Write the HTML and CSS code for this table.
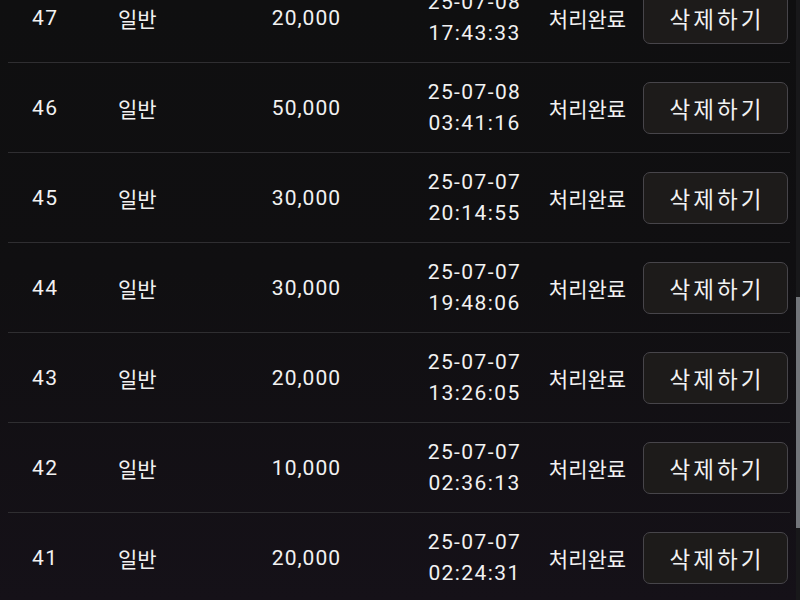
FILE: index.html
```html
<!DOCTYPE html>
<html lang="ko">
<head>
<meta charset="utf-8">
<link rel="stylesheet" href="styles.css">
</head>
<body>
<div class="list">
  <div class="row">
    <div class="id">47</div><div class="type">일반</div><div class="amt">20,000</div>
    <div class="date"><span>25-07-08</span><span>17:43:33</span></div>
    <div class="status">처리완료</div><button class="del">삭제하기</button>
  </div>
  <div class="row">
    <div class="id">46</div><div class="type">일반</div><div class="amt">50,000</div>
    <div class="date"><span>25-07-08</span><span>03:41:16</span></div>
    <div class="status">처리완료</div><button class="del">삭제하기</button>
  </div>
  <div class="row">
    <div class="id">45</div><div class="type">일반</div><div class="amt">30,000</div>
    <div class="date"><span>25-07-07</span><span>20:14:55</span></div>
    <div class="status">처리완료</div><button class="del">삭제하기</button>
  </div>
  <div class="row">
    <div class="id">44</div><div class="type">일반</div><div class="amt">30,000</div>
    <div class="date"><span>25-07-07</span><span>19:48:06</span></div>
    <div class="status">처리완료</div><button class="del">삭제하기</button>
  </div>
  <div class="row">
    <div class="id">43</div><div class="type">일반</div><div class="amt">20,000</div>
    <div class="date"><span>25-07-07</span><span>13:26:05</span></div>
    <div class="status">처리완료</div><button class="del">삭제하기</button>
  </div>
  <div class="row">
    <div class="id">42</div><div class="type">일반</div><div class="amt">10,000</div>
    <div class="date"><span>25-07-07</span><span>02:36:13</span></div>
    <div class="status">처리완료</div><button class="del">삭제하기</button>
  </div>
  <div class="row">
    <div class="id">41</div><div class="type">일반</div><div class="amt">20,000</div>
    <div class="date"><span>25-07-07</span><span>02:24:31</span></div>
    <div class="status">처리완료</div><button class="del">삭제하기</button>
  </div>
</div>
<div class="scrollbar"><div class="thumb"></div></div>
</body>
</html>
```
FILE: styles.css
```css
html, body {
  margin: 0;
  padding: 0;
  height: 600px;
  overflow: hidden;
}
body {
  background: linear-gradient(180deg, #0f0f10 0%, #100f11 45%, #151118 100%);
  color: #f2f2f2;
  font-family: Roboto, "Noto Sans CJK KR", sans-serif;
  font-size: 21px;
}
.list {
  margin: -27px 10px 0 8px;
}
.row {
  display: grid;
  grid-template-columns: 86px 100px 122px 70px 128px 99px 6px 145px;
  align-items: center;
  height: 89px;
  padding-left: 24px;
  border-bottom: 1px solid #2f2e31;
}
.id { grid-column: 1; letter-spacing: 1.5px; }
.type { grid-column: 2; }
.amt {
  grid-column: 3;
  text-align: right;
  letter-spacing: 1px;
  margin-right: -1px;
}
.date {
  grid-column: 5;
  display: flex;
  flex-direction: column;
  align-items: center;
  line-height: 31px;
  letter-spacing: 1.4px;
  padding-left: 1px;
}
.status { grid-column: 6; text-align: center; }
.del {
  grid-column: 8;
  height: 52px;
  background: #1d1b1a;
  color: #f2f2f2;
  border: 1.5px solid #47454a;
  border-radius: 7px;
  font-family: Roboto, "Noto Sans CJK KR", sans-serif;
  font-size: 22.5px;
  font-weight: 400;
  letter-spacing: 3px;
  padding: 0 0 0 3px;
}
.scrollbar {
  position: fixed;
  top: 0;
  right: 0;
  width: 4px;
  height: 600px;
  background: #18181a;
}
.thumb {
  margin-top: 297px;
  height: 231px;
  background: #72757a;
}
```
